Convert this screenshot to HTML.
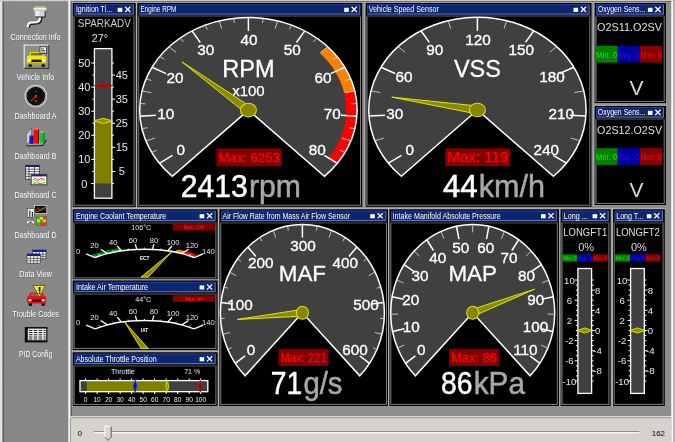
<!DOCTYPE html>
<html><head><meta charset="utf-8"><title>Dashboard A</title>
<style>html,body{margin:0;padding:0;background:#8c8c8c;overflow:hidden}svg{display:block}text{font-family:'Liberation Sans', Arial, sans-serif;}</style>
</head><body>
<svg width="675" height="442" viewBox="0 0 675 442">
<defs><pattern id="dots" width="7" height="7" patternUnits="userSpaceOnUse"><rect width="7" height="7" fill="#888888"/><rect x="1" y="1" width="1" height="1" fill="#7e7e7e"/><rect x="4.5" y="4.5" width="1" height="1" fill="#828282"/></pattern></defs>
<filter id="soft" x="-2%" y="-2%" width="104%" height="104%" filterUnits="objectBoundingBox"><feGaussianBlur stdDeviation="0.35"/></filter>
<g filter="url(#soft)">
<rect x="-8.00" y="-8.00" width="691.00" height="458.00" fill="#8e8e8e" />
<rect x="-8.00" y="-8.00" width="691.00" height="9.40" fill="#cfcbc4" />
<rect x="71.00" y="1.10" width="601.00" height="0.90" fill="#5a5a5a" />
<rect x="-8.00" y="1.10" width="76.30" height="448.90" fill="url(#dots)" />
<rect x="-8.00" y="-8.00" width="10.60" height="458.00" fill="#e6e3dc" />
<rect x="2.60" y="1.00" width="1.20" height="449.00" fill="#585858" />
<rect x="3.80" y="1.40" width="64.50" height="0.70" fill="#6c6c6c" />
<rect x="68.30" y="0.00" width="1.70" height="450.00" fill="#f4f4f4" />
<rect x="70.00" y="1.00" width="1.00" height="416.00" fill="#b0b0b0" />
<rect x="70.90" y="1.00" width="0.90" height="416.00" fill="#4a4a4a" />
<rect x="-8.00" y="-8.00" width="76.30" height="9.40" fill="#cfcbc4" />
<rect x="671.20" y="1.00" width="2.20" height="449.00" fill="#f4f4f4" />
<rect x="673.40" y="-8.00" width="9.60" height="458.00" fill="#b8b5ae" />
<rect x="70.00" y="416.30" width="602.00" height="1.20" fill="#fbfbfb" />
<rect x="70.80" y="417.50" width="600.70" height="32.50" fill="#d6d3cc" />
<rect x="71.50" y="417.40" width="599.70" height="0.70" fill="#8a8884" />
<rect x="71.50" y="1.80" width="64.70" height="1.10" fill="#b4b4b4" />
<rect x="71.80" y="1.80" width="0.90" height="205.50" fill="#b4b4b4" />
<rect x="72.70" y="2.90" width="63.00" height="203.90" fill="#000" />
<rect x="74.30" y="4.20" width="59.40" height="10.30" fill="#0e2672" />
<path d="M74.70 14.10 V4.60 H133.30" fill="none" stroke="#33459a" stroke-width="0.8"/>
<path d="M133.30 4.60 V14.10 H74.70" fill="none" stroke="#7c86c2" stroke-width="0.8"/>
<text x="75.9" y="12.1" font-size="8.2" fill="#fff" text-anchor="start" textLength="36.3" lengthAdjust="spacingAndGlyphs" >Ignition Ti...</text>
<rect x="117.70" y="7.80" width="4.60" height="4.10" fill="#fff" />
<path d="M125.10 6.80 l5.2 5.2 m0 -5.2 l-5.2 5.2" stroke="#fff" stroke-width="1.3" fill="none"/>
<rect x="74.00" y="16.40" width="60.00" height="188.80" fill="#000" stroke="#7c7c78" stroke-width="1"/>
<path d="M74.00 205.20 V16.40" fill="none" stroke="#5c5c5c" stroke-width="1"/>
<rect x="73.50" y="15.00" width="61.00" height="2.00" fill="#2e2e2e" />
<rect x="136.10" y="1.80" width="226.60" height="1.10" fill="#b4b4b4" />
<rect x="136.00" y="1.80" width="1.30" height="205.50" fill="#b4b4b4" />
<rect x="137.30" y="2.90" width="224.90" height="203.90" fill="#000" />
<rect x="138.90" y="4.20" width="221.30" height="10.30" fill="#0e2672" />
<path d="M139.30 14.10 V4.60 H359.80" fill="none" stroke="#33459a" stroke-width="0.8"/>
<path d="M359.80 4.60 V14.10 H139.30" fill="none" stroke="#7c86c2" stroke-width="0.8"/>
<text x="140.5" y="12.1" font-size="8.2" fill="#fff" text-anchor="start" textLength="35.8" lengthAdjust="spacingAndGlyphs" >Engine RPM</text>
<rect x="344.20" y="7.80" width="4.60" height="4.10" fill="#fff" />
<path d="M351.60 6.80 l5.2 5.2 m0 -5.2 l-5.2 5.2" stroke="#fff" stroke-width="1.3" fill="none"/>
<rect x="138.60" y="16.40" width="221.90" height="188.80" fill="#000" stroke="#7c7c78" stroke-width="1"/>
<path d="M138.60 205.20 V16.40" fill="none" stroke="#5c5c5c" stroke-width="1"/>
<rect x="138.10" y="15.00" width="222.90" height="2.00" fill="#2e2e2e" />
<rect x="364.40" y="1.80" width="227.60" height="1.10" fill="#b4b4b4" />
<rect x="364.30" y="1.80" width="1.30" height="205.50" fill="#b4b4b4" />
<rect x="365.60" y="2.90" width="225.90" height="203.90" fill="#000" />
<rect x="367.20" y="4.20" width="222.30" height="10.30" fill="#0e2672" />
<path d="M367.60 14.10 V4.60 H589.10" fill="none" stroke="#33459a" stroke-width="0.8"/>
<path d="M589.10 4.60 V14.10 H367.60" fill="none" stroke="#7c86c2" stroke-width="0.8"/>
<text x="368.8" y="12.1" font-size="8.2" fill="#fff" text-anchor="start" textLength="70.0" lengthAdjust="spacingAndGlyphs" >Vehicle Speed Sensor</text>
<rect x="573.50" y="7.80" width="4.60" height="4.10" fill="#fff" />
<path d="M580.90 6.80 l5.2 5.2 m0 -5.2 l-5.2 5.2" stroke="#fff" stroke-width="1.3" fill="none"/>
<rect x="366.90" y="16.40" width="222.90" height="188.80" fill="#000" stroke="#7c7c78" stroke-width="1"/>
<path d="M366.90 205.20 V16.40" fill="none" stroke="#5c5c5c" stroke-width="1"/>
<rect x="366.40" y="15.00" width="223.90" height="2.00" fill="#2e2e2e" />
<rect x="593.40" y="1.80" width="73.00" height="1.10" fill="#b4b4b4" />
<rect x="593.30" y="1.80" width="1.30" height="101.70" fill="#b4b4b4" />
<rect x="594.60" y="2.90" width="71.30" height="100.10" fill="#000" />
<rect x="596.20" y="4.20" width="67.70" height="10.30" fill="#0e2672" />
<path d="M596.60 14.10 V4.60 H663.50" fill="none" stroke="#33459a" stroke-width="0.8"/>
<path d="M663.50 4.60 V14.10 H596.60" fill="none" stroke="#7c86c2" stroke-width="0.8"/>
<text x="597.8" y="12.1" font-size="8.2" fill="#fff" text-anchor="start" textLength="47.5" lengthAdjust="spacingAndGlyphs" >Oxygen Sens...</text>
<rect x="647.90" y="7.80" width="4.60" height="4.10" fill="#fff" />
<path d="M655.30 6.80 l5.2 5.2 m0 -5.2 l-5.2 5.2" stroke="#fff" stroke-width="1.3" fill="none"/>
<rect x="595.90" y="16.40" width="68.30" height="85.00" fill="#000" stroke="#7c7c78" stroke-width="1"/>
<path d="M595.90 101.40 V16.40" fill="none" stroke="#5c5c5c" stroke-width="1"/>
<rect x="595.40" y="15.00" width="69.30" height="2.00" fill="#2e2e2e" />
<rect x="593.40" y="104.80" width="73.00" height="1.10" fill="#b4b4b4" />
<rect x="593.30" y="104.80" width="1.30" height="100.70" fill="#b4b4b4" />
<rect x="594.60" y="105.90" width="71.30" height="99.10" fill="#000" />
<rect x="596.20" y="107.20" width="67.70" height="10.30" fill="#0e2672" />
<path d="M596.60 117.10 V107.60 H663.50" fill="none" stroke="#33459a" stroke-width="0.8"/>
<path d="M663.50 107.60 V117.10 H596.60" fill="none" stroke="#7c86c2" stroke-width="0.8"/>
<text x="597.8" y="115.1" font-size="8.2" fill="#fff" text-anchor="start" textLength="47.5" lengthAdjust="spacingAndGlyphs" >Oxygen Sens...</text>
<rect x="647.90" y="110.80" width="4.60" height="4.10" fill="#fff" />
<path d="M655.30 109.80 l5.2 5.2 m0 -5.2 l-5.2 5.2" stroke="#fff" stroke-width="1.3" fill="none"/>
<rect x="595.90" y="119.40" width="68.30" height="84.00" fill="#000" stroke="#7c7c78" stroke-width="1"/>
<path d="M595.90 203.40 V119.40" fill="none" stroke="#5c5c5c" stroke-width="1"/>
<rect x="595.40" y="118.00" width="69.30" height="2.00" fill="#2e2e2e" />
<rect x="71.50" y="208.20" width="146.60" height="1.10" fill="#b4b4b4" />
<rect x="71.80" y="208.20" width="0.90" height="71.80" fill="#b4b4b4" />
<rect x="72.70" y="209.30" width="144.90" height="70.20" fill="#000" />
<rect x="74.30" y="210.60" width="141.30" height="10.30" fill="#0e2672" />
<path d="M74.70 220.50 V211.00 H215.20" fill="none" stroke="#33459a" stroke-width="0.8"/>
<path d="M215.20 211.00 V220.50 H74.70" fill="none" stroke="#7c86c2" stroke-width="0.8"/>
<text x="75.9" y="218.5" font-size="8.2" fill="#fff" text-anchor="start" textLength="90.4" lengthAdjust="spacingAndGlyphs" >Engine Coolant Temperature</text>
<rect x="199.60" y="214.20" width="4.60" height="4.10" fill="#fff" />
<path d="M207.00 213.20 l5.2 5.2 m0 -5.2 l-5.2 5.2" stroke="#fff" stroke-width="1.3" fill="none"/>
<rect x="74.00" y="222.80" width="141.90" height="55.10" fill="#000" stroke="#7c7c78" stroke-width="1"/>
<path d="M74.00 277.90 V222.80" fill="none" stroke="#5c5c5c" stroke-width="1"/>
<rect x="73.50" y="221.40" width="142.90" height="2.00" fill="#2e2e2e" />
<rect x="71.50" y="279.40" width="146.60" height="1.10" fill="#b4b4b4" />
<rect x="71.80" y="279.40" width="0.90" height="71.10" fill="#b4b4b4" />
<rect x="72.70" y="280.50" width="144.90" height="69.50" fill="#000" />
<rect x="74.30" y="281.80" width="141.30" height="10.30" fill="#0e2672" />
<path d="M74.70 291.70 V282.20 H215.20" fill="none" stroke="#33459a" stroke-width="0.8"/>
<path d="M215.20 282.20 V291.70 H74.70" fill="none" stroke="#7c86c2" stroke-width="0.8"/>
<text x="75.9" y="289.7" font-size="8.2" fill="#fff" text-anchor="start" textLength="72.2" lengthAdjust="spacingAndGlyphs" >Intake Air Temperature</text>
<rect x="199.60" y="285.40" width="4.60" height="4.10" fill="#fff" />
<path d="M207.00 284.40 l5.2 5.2 m0 -5.2 l-5.2 5.2" stroke="#fff" stroke-width="1.3" fill="none"/>
<rect x="74.00" y="294.00" width="141.90" height="54.40" fill="#000" stroke="#7c7c78" stroke-width="1"/>
<path d="M74.00 348.40 V294.00" fill="none" stroke="#5c5c5c" stroke-width="1"/>
<rect x="73.50" y="292.60" width="142.90" height="2.00" fill="#2e2e2e" />
<rect x="71.50" y="351.20" width="146.60" height="1.10" fill="#b4b4b4" />
<rect x="71.80" y="351.20" width="0.90" height="55.30" fill="#b4b4b4" />
<rect x="72.70" y="352.30" width="144.90" height="53.70" fill="#000" />
<rect x="74.30" y="353.60" width="141.30" height="10.30" fill="#0e2672" />
<path d="M74.70 363.50 V354.00 H215.20" fill="none" stroke="#33459a" stroke-width="0.8"/>
<path d="M215.20 354.00 V363.50 H74.70" fill="none" stroke="#7c86c2" stroke-width="0.8"/>
<text x="75.9" y="361.5" font-size="8.2" fill="#fff" text-anchor="start" textLength="80.7" lengthAdjust="spacingAndGlyphs" >Absolute Throttle Position</text>
<rect x="199.60" y="357.20" width="4.60" height="4.10" fill="#fff" />
<path d="M207.00 356.20 l5.2 5.2 m0 -5.2 l-5.2 5.2" stroke="#fff" stroke-width="1.3" fill="none"/>
<rect x="74.00" y="365.80" width="141.90" height="38.60" fill="#000" stroke="#7c7c78" stroke-width="1"/>
<path d="M74.00 404.40 V365.80" fill="none" stroke="#5c5c5c" stroke-width="1"/>
<rect x="73.50" y="364.40" width="142.90" height="2.00" fill="#2e2e2e" />
<rect x="218.20" y="208.20" width="170.50" height="1.10" fill="#b4b4b4" />
<rect x="218.10" y="208.20" width="1.30" height="198.30" fill="#b4b4b4" />
<rect x="219.40" y="209.30" width="168.80" height="196.70" fill="#000" />
<rect x="221.00" y="210.60" width="165.20" height="10.30" fill="#0e2672" />
<path d="M221.40 220.50 V211.00 H385.80" fill="none" stroke="#33459a" stroke-width="0.8"/>
<path d="M385.80 211.00 V220.50 H221.40" fill="none" stroke="#7c86c2" stroke-width="0.8"/>
<text x="222.6" y="218.5" font-size="8.2" fill="#fff" text-anchor="start" textLength="127.5" lengthAdjust="spacingAndGlyphs" >Air Flow Rate from Mass Air Flow Sensor</text>
<rect x="370.20" y="214.20" width="4.60" height="4.10" fill="#fff" />
<path d="M377.60 213.20 l5.2 5.2 m0 -5.2 l-5.2 5.2" stroke="#fff" stroke-width="1.3" fill="none"/>
<rect x="220.70" y="222.80" width="165.80" height="181.60" fill="#000" stroke="#7c7c78" stroke-width="1"/>
<path d="M220.70 404.40 V222.80" fill="none" stroke="#5c5c5c" stroke-width="1"/>
<rect x="220.20" y="221.40" width="166.80" height="2.00" fill="#2e2e2e" />
<rect x="388.20" y="208.20" width="171.30" height="1.10" fill="#b4b4b4" />
<rect x="388.10" y="208.20" width="1.30" height="198.30" fill="#b4b4b4" />
<rect x="389.40" y="209.30" width="169.60" height="196.70" fill="#000" />
<rect x="391.00" y="210.60" width="166.00" height="10.30" fill="#0e2672" />
<path d="M391.40 220.50 V211.00 H556.60" fill="none" stroke="#33459a" stroke-width="0.8"/>
<path d="M556.60 211.00 V220.50 H391.40" fill="none" stroke="#7c86c2" stroke-width="0.8"/>
<text x="392.6" y="218.5" font-size="8.2" fill="#fff" text-anchor="start" textLength="108.0" lengthAdjust="spacingAndGlyphs" >Intake Manifold Absolute Pressure</text>
<rect x="541.00" y="214.20" width="4.60" height="4.10" fill="#fff" />
<path d="M548.40 213.20 l5.2 5.2 m0 -5.2 l-5.2 5.2" stroke="#fff" stroke-width="1.3" fill="none"/>
<rect x="390.70" y="222.80" width="166.60" height="181.60" fill="#000" stroke="#7c7c78" stroke-width="1"/>
<path d="M390.70 404.40 V222.80" fill="none" stroke="#5c5c5c" stroke-width="1"/>
<rect x="390.20" y="221.40" width="167.60" height="2.00" fill="#2e2e2e" />
<rect x="559.40" y="208.20" width="51.70" height="1.10" fill="#b4b4b4" />
<rect x="559.30" y="208.20" width="1.30" height="198.30" fill="#b4b4b4" />
<rect x="560.60" y="209.30" width="50.00" height="196.70" fill="#000" />
<rect x="562.20" y="210.60" width="46.40" height="10.30" fill="#0e2672" />
<path d="M562.60 220.50 V211.00 H608.20" fill="none" stroke="#33459a" stroke-width="0.8"/>
<path d="M608.20 211.00 V220.50 H562.60" fill="none" stroke="#7c86c2" stroke-width="0.8"/>
<text x="563.8" y="218.5" font-size="8.2" fill="#fff" text-anchor="start" textLength="23.9" lengthAdjust="spacingAndGlyphs" >Long ...</text>
<rect x="592.60" y="214.20" width="4.60" height="4.10" fill="#fff" />
<path d="M600.00 213.20 l5.2 5.2 m0 -5.2 l-5.2 5.2" stroke="#fff" stroke-width="1.3" fill="none"/>
<rect x="561.90" y="222.80" width="47.00" height="181.60" fill="#000" stroke="#7c7c78" stroke-width="1"/>
<path d="M561.90 404.40 V222.80" fill="none" stroke="#5c5c5c" stroke-width="1"/>
<rect x="561.40" y="221.40" width="48.00" height="2.00" fill="#2e2e2e" />
<rect x="611.80" y="208.20" width="53.50" height="1.10" fill="#b4b4b4" />
<rect x="611.70" y="208.20" width="1.30" height="198.30" fill="#b4b4b4" />
<rect x="613.00" y="209.30" width="51.80" height="196.70" fill="#000" />
<rect x="614.60" y="210.60" width="48.20" height="10.30" fill="#0e2672" />
<path d="M615.00 220.50 V211.00 H662.40" fill="none" stroke="#33459a" stroke-width="0.8"/>
<path d="M662.40 211.00 V220.50 H615.00" fill="none" stroke="#7c86c2" stroke-width="0.8"/>
<text x="616.2" y="218.5" font-size="8.2" fill="#fff" text-anchor="start" textLength="27.1" lengthAdjust="spacingAndGlyphs" >Long T...</text>
<rect x="646.80" y="214.20" width="4.60" height="4.10" fill="#fff" />
<path d="M654.20 213.20 l5.2 5.2 m0 -5.2 l-5.2 5.2" stroke="#fff" stroke-width="1.3" fill="none"/>
<rect x="614.30" y="222.80" width="48.80" height="181.60" fill="#000" stroke="#7c7c78" stroke-width="1"/>
<path d="M614.30 404.40 V222.80" fill="none" stroke="#5c5c5c" stroke-width="1"/>
<rect x="613.80" y="221.40" width="49.80" height="2.00" fill="#2e2e2e" />
<path d="M248.40 110.10 L172.35 176.33 A108.7 92.7 0 1 1 324.45 176.33 Z" fill="#404040" stroke="none"/>
<path d="M327.34 47.05 A108.16 92.24 0 0 1 354.24 91.12 L344.14 92.93 A97.83 83.43 0 0 0 319.80 53.07 Z" fill="#ff8000"/>
<path d="M354.24 91.12 A108.16 92.24 0 0 1 337.00 163.00 L328.54 157.95 A97.83 83.43 0 0 0 344.14 92.93 Z" fill="#ff0000"/>
<path d="M248.40 110.10 L172.35 176.33 A108.7 92.7 0 1 1 324.45 176.33 Z" fill="none" stroke="#fff" stroke-width="1.5" stroke-linejoin="miter"/>
<line x1="159.36" y1="163.27" x2="172.45" y2="155.45" stroke="#fff" stroke-width="1.5" />
<line x1="151.71" y1="152.45" x2="156.74" y2="150.25" stroke="#d0d0d0" stroke-width="0.9" />
<line x1="145.86" y1="140.85" x2="154.88" y2="138.15" stroke="#d0d0d0" stroke-width="0.9" />
<line x1="141.91" y1="128.68" x2="147.44" y2="127.71" stroke="#d0d0d0" stroke-width="0.9" />
<text x="180.7" y="154.7" font-size="15.3" fill="#fff" text-anchor="middle" stroke="#fff" stroke-width="0.35">0</text>
<line x1="139.93" y1="116.16" x2="155.88" y2="115.27" stroke="#fff" stroke-width="1.5" />
<line x1="139.97" y1="103.53" x2="145.61" y2="103.87" stroke="#d0d0d0" stroke-width="0.9" />
<line x1="142.03" y1="91.02" x2="151.39" y2="92.70" stroke="#d0d0d0" stroke-width="0.9" />
<line x1="146.05" y1="78.87" x2="151.38" y2="80.49" stroke="#d0d0d0" stroke-width="0.9" />
<text x="165.8" y="119.3" font-size="15.3" fill="#fff" text-anchor="middle" stroke="#fff" stroke-width="0.35">10</text>
<line x1="151.98" y1="67.30" x2="166.16" y2="73.59" stroke="#fff" stroke-width="1.5" />
<line x1="159.70" y1="56.52" x2="164.31" y2="59.30" stroke="#d0d0d0" stroke-width="0.9" />
<line x1="169.06" y1="46.73" x2="176.05" y2="52.31" stroke="#d0d0d0" stroke-width="0.9" />
<line x1="179.90" y1="38.12" x2="183.46" y2="41.87" stroke="#d0d0d0" stroke-width="0.9" />
<text x="175.0" y="82.5" font-size="15.3" fill="#fff" text-anchor="middle" stroke="#fff" stroke-width="0.35">20</text>
<line x1="192.01" y1="30.85" x2="200.30" y2="42.50" stroke="#fff" stroke-width="1.5" />
<line x1="205.16" y1="25.05" x2="207.41" y2="29.47" stroke="#d0d0d0" stroke-width="0.9" />
<line x1="219.12" y1="20.83" x2="221.70" y2="28.68" stroke="#d0d0d0" stroke-width="0.9" />
<line x1="233.62" y1="18.26" x2="234.39" y2="23.04" stroke="#d0d0d0" stroke-width="0.9" />
<text x="205.7" y="55.0" font-size="15.3" fill="#fff" text-anchor="middle" stroke="#fff" stroke-width="0.35">30</text>
<line x1="248.40" y1="17.40" x2="248.40" y2="31.03" stroke="#fff" stroke-width="1.5" />
<line x1="263.18" y1="18.26" x2="262.41" y2="23.04" stroke="#d0d0d0" stroke-width="0.9" />
<line x1="277.68" y1="20.83" x2="275.10" y2="28.68" stroke="#d0d0d0" stroke-width="0.9" />
<line x1="291.64" y1="25.05" x2="289.39" y2="29.47" stroke="#d0d0d0" stroke-width="0.9" />
<text x="249.0" y="44.9" font-size="15.3" fill="#fff" text-anchor="middle" stroke="#fff" stroke-width="0.35">40</text>
<line x1="304.79" y1="30.85" x2="296.50" y2="42.50" stroke="#fff" stroke-width="1.5" />
<line x1="316.90" y1="38.12" x2="313.34" y2="41.87" stroke="#d0d0d0" stroke-width="0.9" />
<line x1="327.74" y1="46.73" x2="320.75" y2="52.31" stroke="#d0d0d0" stroke-width="0.9" />
<line x1="337.10" y1="56.52" x2="332.49" y2="59.30" stroke="#d0d0d0" stroke-width="0.9" />
<text x="292.3" y="55.0" font-size="15.3" fill="#fff" text-anchor="middle" stroke="#fff" stroke-width="0.35">50</text>
<line x1="344.82" y1="67.30" x2="330.64" y2="73.59" stroke="#fff" stroke-width="1.5" />
<line x1="350.75" y1="78.87" x2="345.42" y2="80.49" stroke="#d0d0d0" stroke-width="0.9" />
<line x1="354.77" y1="91.02" x2="345.41" y2="92.70" stroke="#d0d0d0" stroke-width="0.9" />
<line x1="356.83" y1="103.53" x2="351.19" y2="103.87" stroke="#d0d0d0" stroke-width="0.9" />
<text x="323.0" y="82.5" font-size="15.3" fill="#fff" text-anchor="middle" stroke="#fff" stroke-width="0.35">60</text>
<line x1="356.87" y1="116.16" x2="340.92" y2="115.27" stroke="#fff" stroke-width="1.5" />
<line x1="354.89" y1="128.68" x2="349.36" y2="127.71" stroke="#d0d0d0" stroke-width="0.9" />
<line x1="350.94" y1="140.85" x2="341.92" y2="138.15" stroke="#d0d0d0" stroke-width="0.9" />
<line x1="345.09" y1="152.45" x2="340.06" y2="150.25" stroke="#d0d0d0" stroke-width="0.9" />
<text x="332.2" y="119.3" font-size="15.3" fill="#fff" text-anchor="middle" stroke="#fff" stroke-width="0.35">70</text>
<line x1="337.44" y1="163.27" x2="324.35" y2="155.45" stroke="#fff" stroke-width="1.5" />
<text x="317.3" y="154.7" font-size="15.3" fill="#fff" text-anchor="middle" stroke="#fff" stroke-width="0.35">80</text>
<text x="248.4" y="76.8" font-size="23.5" fill="#fff" text-anchor="middle" stroke="#fff" stroke-width="0.3">RPM</text>
<text x="248.4" y="95.5" font-size="15" fill="#fff" text-anchor="middle" stroke="#fff" stroke-width="0.25">x100</text>
<path d="M182.18 62.03 L250.76 106.85 L246.04 113.35 Z" fill="#8a8a00" stroke="#e4e400" stroke-width="1" stroke-linejoin="round"/>
<ellipse cx="248.40" cy="110.10" rx="7.99" ry="6.81" fill="#858500" stroke="#dcdc00" stroke-width="1.1"/>
<rect x="216.40" y="148.40" width="65.40" height="18.00" fill="#800000" />
<text x="249.1" y="162.3" font-size="13.6" fill="#ff0000" text-anchor="middle" textLength="61.4" lengthAdjust="spacingAndGlyphs" stroke="#ff0000" stroke-width="0.3">Max: 6253</text>
<text x="180.7" y="196.6" font-size="30.5" fill="#fff" text-anchor="start" textLength="67.0" lengthAdjust="spacingAndGlyphs" stroke="#fff" stroke-width="0.5">2413</text>
<text x="248.9" y="196.6" font-size="30.5" fill="#a8a8a8" text-anchor="start" textLength="51.9" lengthAdjust="spacingAndGlyphs" stroke="#a8a8a8" stroke-width="0.5">rpm</text>
<path d="M477.40 110.00 L401.35 176.23 A108.7 92.7 0 1 1 553.45 176.23 Z" fill="#404040" stroke="none"/>
<path d="M477.40 110.00 L401.35 176.23 A108.7 92.7 0 1 1 553.45 176.23 Z" fill="none" stroke="#fff" stroke-width="1.5" stroke-linejoin="miter"/>
<line x1="388.36" y1="163.17" x2="401.45" y2="155.35" stroke="#fff" stroke-width="1.5" />
<line x1="374.86" y1="140.75" x2="383.88" y2="138.05" stroke="#d0d0d0" stroke-width="0.9" />
<text x="409.7" y="154.6" font-size="15.3" fill="#fff" text-anchor="middle" stroke="#fff" stroke-width="0.35">0</text>
<line x1="368.93" y1="116.06" x2="384.88" y2="115.17" stroke="#fff" stroke-width="1.5" />
<line x1="371.03" y1="90.92" x2="380.39" y2="92.60" stroke="#d0d0d0" stroke-width="0.9" />
<text x="394.8" y="119.2" font-size="15.3" fill="#fff" text-anchor="middle" stroke="#fff" stroke-width="0.35">30</text>
<line x1="380.98" y1="67.20" x2="395.16" y2="73.49" stroke="#fff" stroke-width="1.5" />
<line x1="398.06" y1="46.63" x2="405.05" y2="52.21" stroke="#d0d0d0" stroke-width="0.9" />
<text x="404.0" y="82.4" font-size="15.3" fill="#fff" text-anchor="middle" stroke="#fff" stroke-width="0.35">60</text>
<line x1="421.01" y1="30.75" x2="429.30" y2="42.40" stroke="#fff" stroke-width="1.5" />
<line x1="448.12" y1="20.73" x2="450.70" y2="28.58" stroke="#d0d0d0" stroke-width="0.9" />
<text x="434.7" y="54.9" font-size="15.3" fill="#fff" text-anchor="middle" stroke="#fff" stroke-width="0.35">90</text>
<line x1="477.40" y1="17.30" x2="477.40" y2="30.93" stroke="#fff" stroke-width="1.5" />
<line x1="506.68" y1="20.73" x2="504.10" y2="28.58" stroke="#d0d0d0" stroke-width="0.9" />
<text x="478.0" y="44.8" font-size="15.3" fill="#fff" text-anchor="middle" stroke="#fff" stroke-width="0.35">120</text>
<line x1="533.79" y1="30.75" x2="525.50" y2="42.40" stroke="#fff" stroke-width="1.5" />
<line x1="556.74" y1="46.63" x2="549.75" y2="52.21" stroke="#d0d0d0" stroke-width="0.9" />
<text x="521.3" y="54.9" font-size="15.3" fill="#fff" text-anchor="middle" stroke="#fff" stroke-width="0.35">150</text>
<line x1="573.82" y1="67.20" x2="559.64" y2="73.49" stroke="#fff" stroke-width="1.5" />
<line x1="583.77" y1="90.92" x2="574.41" y2="92.60" stroke="#d0d0d0" stroke-width="0.9" />
<text x="552.0" y="82.4" font-size="15.3" fill="#fff" text-anchor="middle" stroke="#fff" stroke-width="0.35">180</text>
<line x1="585.87" y1="116.06" x2="569.92" y2="115.17" stroke="#fff" stroke-width="1.5" />
<line x1="579.94" y1="140.75" x2="570.92" y2="138.05" stroke="#d0d0d0" stroke-width="0.9" />
<text x="561.2" y="119.2" font-size="15.3" fill="#fff" text-anchor="middle" stroke="#fff" stroke-width="0.35">210</text>
<line x1="566.44" y1="163.17" x2="553.35" y2="155.35" stroke="#fff" stroke-width="1.5" />
<text x="546.3" y="154.6" font-size="15.3" fill="#fff" text-anchor="middle" stroke="#fff" stroke-width="0.35">240</text>
<text x="477.4" y="76.8" font-size="23.5" fill="#fff" text-anchor="middle" stroke="#fff" stroke-width="0.3">VSS</text>
<path d="M391.76 97.12 L478.00 106.03 L476.80 113.97 Z" fill="#8a8a00" stroke="#e4e400" stroke-width="1" stroke-linejoin="round"/>
<ellipse cx="477.40" cy="110.00" rx="7.99" ry="6.81" fill="#858500" stroke="#dcdc00" stroke-width="1.1"/>
<rect x="445.20" y="148.40" width="65.20" height="17.80" fill="#800000" />
<text x="477.8" y="162.3" font-size="14" fill="#ff0000" text-anchor="middle" textLength="61.2" lengthAdjust="spacingAndGlyphs" stroke="#ff0000" stroke-width="0.3">Max: 119</text>
<text x="443.0" y="197.0" font-size="30.5" fill="#fff" text-anchor="start" textLength="34.5" lengthAdjust="spacingAndGlyphs" stroke="#fff" stroke-width="0.5">44</text>
<text x="478.7" y="197.0" font-size="30.5" fill="#a8a8a8" text-anchor="start" textLength="66.3" lengthAdjust="spacingAndGlyphs" stroke="#a8a8a8" stroke-width="0.5">km/h</text>
<path d="M302.40 312.80 L245.03 375.82 A82.0 88.2 0 1 1 359.77 375.82 Z" fill="#404040" stroke="none"/>
<path d="M302.40 312.80 L245.03 375.82 A82.0 88.2 0 1 1 359.77 375.82 Z" fill="none" stroke="#fff" stroke-width="1.5" stroke-linejoin="miter"/>
<line x1="235.23" y1="363.39" x2="245.10" y2="355.95" stroke="#fff" stroke-width="1.5" />
<line x1="227.83" y1="349.49" x2="231.71" y2="347.58" stroke="#d0d0d0" stroke-width="0.9" />
<line x1="222.89" y1="334.39" x2="229.89" y2="332.49" stroke="#d0d0d0" stroke-width="0.9" />
<line x1="220.58" y1="318.57" x2="224.83" y2="318.27" stroke="#d0d0d0" stroke-width="0.9" />
<text x="250.9" y="355.4" font-size="15.3" fill="#fff" text-anchor="middle" stroke="#fff" stroke-width="0.35">0</text>
<line x1="220.95" y1="302.56" x2="232.93" y2="304.07" stroke="#fff" stroke-width="1.5" />
<line x1="224.02" y1="286.89" x2="228.09" y2="288.24" stroke="#d0d0d0" stroke-width="0.9" />
<line x1="229.67" y1="272.07" x2="236.07" y2="275.66" stroke="#d0d0d0" stroke-width="0.9" />
<line x1="237.71" y1="258.60" x2="241.07" y2="261.42" stroke="#d0d0d0" stroke-width="0.9" />
<text x="239.9" y="309.7" font-size="15.3" fill="#fff" text-anchor="middle" stroke="#fff" stroke-width="0.35">100</text>
<line x1="247.89" y1="246.91" x2="255.90" y2="256.60" stroke="#fff" stroke-width="1.5" />
<line x1="259.86" y1="237.40" x2="262.07" y2="241.32" stroke="#d0d0d0" stroke-width="0.9" />
<line x1="273.24" y1="230.37" x2="275.80" y2="237.62" stroke="#d0d0d0" stroke-width="0.9" />
<line x1="287.57" y1="226.05" x2="288.34" y2="230.56" stroke="#d0d0d0" stroke-width="0.9" />
<text x="260.8" y="268.0" font-size="15.3" fill="#fff" text-anchor="middle" stroke="#fff" stroke-width="0.35">200</text>
<line x1="302.40" y1="224.60" x2="302.40" y2="237.57" stroke="#fff" stroke-width="1.5" />
<line x1="317.23" y1="226.05" x2="316.46" y2="230.56" stroke="#d0d0d0" stroke-width="0.9" />
<line x1="331.56" y1="230.37" x2="329.00" y2="237.62" stroke="#d0d0d0" stroke-width="0.9" />
<line x1="344.94" y1="237.40" x2="342.73" y2="241.32" stroke="#d0d0d0" stroke-width="0.9" />
<text x="303.0" y="251.3" font-size="15.3" fill="#fff" text-anchor="middle" stroke="#fff" stroke-width="0.35">300</text>
<line x1="356.91" y1="246.91" x2="348.90" y2="256.60" stroke="#fff" stroke-width="1.5" />
<line x1="367.09" y1="258.60" x2="363.73" y2="261.42" stroke="#d0d0d0" stroke-width="0.9" />
<line x1="375.13" y1="272.07" x2="368.73" y2="275.66" stroke="#d0d0d0" stroke-width="0.9" />
<line x1="380.78" y1="286.89" x2="376.71" y2="288.24" stroke="#d0d0d0" stroke-width="0.9" />
<text x="345.2" y="268.0" font-size="15.3" fill="#fff" text-anchor="middle" stroke="#fff" stroke-width="0.35">400</text>
<line x1="383.85" y1="302.56" x2="371.87" y2="304.07" stroke="#fff" stroke-width="1.5" />
<line x1="384.22" y1="318.57" x2="379.97" y2="318.27" stroke="#d0d0d0" stroke-width="0.9" />
<line x1="381.91" y1="334.39" x2="374.91" y2="332.49" stroke="#d0d0d0" stroke-width="0.9" />
<line x1="376.97" y1="349.49" x2="373.09" y2="347.58" stroke="#d0d0d0" stroke-width="0.9" />
<text x="366.1" y="309.7" font-size="15.3" fill="#fff" text-anchor="middle" stroke="#fff" stroke-width="0.35">500</text>
<line x1="369.57" y1="363.39" x2="359.70" y2="355.95" stroke="#fff" stroke-width="1.5" />
<text x="355.1" y="355.4" font-size="15.3" fill="#fff" text-anchor="middle" stroke="#fff" stroke-width="0.35">600</text>
<text x="302.4" y="280.5" font-size="22.4" fill="#fff" text-anchor="middle" stroke="#fff" stroke-width="0.3">MAF</text>
<path d="M237.09 319.46 L302.05 309.42 L302.75 316.18 Z" fill="#8a8a00" stroke="#e4e400" stroke-width="1" stroke-linejoin="round"/>
<ellipse cx="302.40" cy="312.80" rx="6.03" ry="6.48" fill="#858500" stroke="#dcdc00" stroke-width="1.1"/>
<rect x="278.50" y="348.80" width="50.10" height="17.20" fill="#800000" />
<text x="303.6" y="361.7" font-size="12" fill="#ff0000" text-anchor="middle" textLength="46.1" lengthAdjust="spacingAndGlyphs" stroke="#ff0000" stroke-width="0.3">Max: 221</text>
<text x="270.7" y="394.2" font-size="30.5" fill="#fff" text-anchor="start" textLength="31.5" lengthAdjust="spacingAndGlyphs" stroke="#fff" stroke-width="0.5">71</text>
<text x="303.4" y="394.2" font-size="30.5" fill="#a8a8a8" text-anchor="start" textLength="39.1" lengthAdjust="spacingAndGlyphs" stroke="#a8a8a8" stroke-width="0.5">g/s</text>
<path d="M472.70 312.80 L415.33 375.82 A82.0 88.2 0 1 1 530.07 375.82 Z" fill="#404040" stroke="none"/>
<path d="M472.70 312.80 L415.33 375.82 A82.0 88.2 0 1 1 530.07 375.82 Z" fill="none" stroke="#fff" stroke-width="1.5" stroke-linejoin="miter"/>
<line x1="405.53" y1="363.39" x2="415.40" y2="355.95" stroke="#fff" stroke-width="1.5" />
<line x1="397.58" y1="348.16" x2="404.19" y2="345.05" stroke="#d0d0d0" stroke-width="0.9" />
<text x="421.2" y="355.4" font-size="15.3" fill="#fff" text-anchor="middle" stroke="#fff" stroke-width="0.35">0</text>
<line x1="392.57" y1="331.55" x2="404.35" y2="328.79" stroke="#fff" stroke-width="1.5" />
<line x1="390.71" y1="314.20" x2="397.93" y2="314.08" stroke="#d0d0d0" stroke-width="0.9" />
<text x="411.2" y="331.5" font-size="15.3" fill="#fff" text-anchor="middle" stroke="#fff" stroke-width="0.35">10</text>
<line x1="392.06" y1="296.80" x2="403.92" y2="299.15" stroke="#fff" stroke-width="1.5" />
<line x1="396.57" y1="280.02" x2="403.27" y2="282.90" stroke="#d0d0d0" stroke-width="0.9" />
<text x="410.8" y="305.4" font-size="15.3" fill="#fff" text-anchor="middle" stroke="#fff" stroke-width="0.35">20</text>
<line x1="404.07" y1="264.53" x2="414.16" y2="271.62" stroke="#fff" stroke-width="1.5" />
<line x1="414.26" y1="250.93" x2="419.40" y2="256.37" stroke="#d0d0d0" stroke-width="0.9" />
<text x="420.1" y="281.2" font-size="15.3" fill="#fff" text-anchor="middle" stroke="#fff" stroke-width="0.35">30</text>
<line x1="426.74" y1="239.76" x2="433.49" y2="250.49" stroke="#fff" stroke-width="1.5" />
<line x1="441.02" y1="231.45" x2="443.81" y2="238.61" stroke="#d0d0d0" stroke-width="0.9" />
<text x="437.7" y="262.6" font-size="15.3" fill="#fff" text-anchor="middle" stroke="#fff" stroke-width="0.35">40</text>
<line x1="456.54" y1="226.33" x2="458.92" y2="239.04" stroke="#fff" stroke-width="1.5" />
<line x1="472.70" y1="224.60" x2="472.70" y2="232.36" stroke="#d0d0d0" stroke-width="0.9" />
<text x="460.8" y="252.6" font-size="15.3" fill="#fff" text-anchor="middle" stroke="#fff" stroke-width="0.35">50</text>
<line x1="488.86" y1="226.33" x2="486.48" y2="239.04" stroke="#fff" stroke-width="1.5" />
<line x1="504.38" y1="231.45" x2="501.59" y2="238.61" stroke="#d0d0d0" stroke-width="0.9" />
<text x="485.8" y="252.6" font-size="15.3" fill="#fff" text-anchor="middle" stroke="#fff" stroke-width="0.35">60</text>
<line x1="518.66" y1="239.76" x2="511.91" y2="250.49" stroke="#fff" stroke-width="1.5" />
<line x1="531.14" y1="250.93" x2="526.00" y2="256.37" stroke="#d0d0d0" stroke-width="0.9" />
<text x="508.9" y="262.6" font-size="15.3" fill="#fff" text-anchor="middle" stroke="#fff" stroke-width="0.35">70</text>
<line x1="541.33" y1="264.53" x2="531.24" y2="271.62" stroke="#fff" stroke-width="1.5" />
<line x1="548.83" y1="280.02" x2="542.13" y2="282.90" stroke="#d0d0d0" stroke-width="0.9" />
<text x="526.5" y="281.2" font-size="15.3" fill="#fff" text-anchor="middle" stroke="#fff" stroke-width="0.35">80</text>
<line x1="553.34" y1="296.80" x2="541.48" y2="299.15" stroke="#fff" stroke-width="1.5" />
<line x1="554.69" y1="314.20" x2="547.47" y2="314.08" stroke="#d0d0d0" stroke-width="0.9" />
<text x="535.8" y="305.4" font-size="15.3" fill="#fff" text-anchor="middle" stroke="#fff" stroke-width="0.35">90</text>
<line x1="552.83" y1="331.55" x2="541.05" y2="328.79" stroke="#fff" stroke-width="1.5" />
<line x1="547.82" y1="348.16" x2="541.21" y2="345.05" stroke="#d0d0d0" stroke-width="0.9" />
<text x="535.4" y="331.5" font-size="15.3" fill="#fff" text-anchor="middle" stroke="#fff" stroke-width="0.35">100</text>
<line x1="539.87" y1="363.39" x2="530.00" y2="355.95" stroke="#fff" stroke-width="1.5" />
<text x="525.4" y="355.4" font-size="15.3" fill="#fff" text-anchor="middle" stroke="#fff" stroke-width="0.35">110</text>
<text x="472.7" y="280.5" font-size="22.4" fill="#fff" text-anchor="middle" stroke="#fff" stroke-width="0.3">MAP</text>
<path d="M534.52 289.19 L473.91 315.98 L471.49 309.62 Z" fill="#8a8a00" stroke="#e4e400" stroke-width="1" stroke-linejoin="round"/>
<ellipse cx="472.70" cy="312.80" rx="6.03" ry="6.48" fill="#858500" stroke="#dcdc00" stroke-width="1.1"/>
<rect x="449.00" y="348.80" width="50.00" height="17.20" fill="#800000" />
<text x="474.0" y="361.7" font-size="12" fill="#ff0000" text-anchor="middle" textLength="46.0" lengthAdjust="spacingAndGlyphs" stroke="#ff0000" stroke-width="0.3">Max: 86</text>
<text x="441.0" y="394.2" font-size="30.5" fill="#fff" text-anchor="start" textLength="31.5" lengthAdjust="spacingAndGlyphs" stroke="#fff" stroke-width="0.5">86</text>
<text x="473.7" y="394.2" font-size="30.5" fill="#a8a8a8" text-anchor="start" textLength="51.3" lengthAdjust="spacingAndGlyphs" stroke="#a8a8a8" stroke-width="0.5">kPa</text>
<text x="104.3" y="27.2" font-size="10.2" fill="#d0d0d0" text-anchor="middle" textLength="53.0" lengthAdjust="spacingAndGlyphs" >SPARKADV</text>
<text x="99.8" y="41.6" font-size="10.8" fill="#e0e0e0" text-anchor="middle" >27°</text>
<rect x="94.40" y="48.60" width="17.50" height="149.60" fill="#404040" />
<rect x="94.40" y="120.36" width="17.50" height="63.14" fill="#808000" />
<rect x="94.40" y="48.60" width="17.50" height="149.60" fill="none" stroke="#fff" stroke-width="1.3"/>
<line x1="91.20" y1="183.50" x2="94.40" y2="183.50" stroke="#fff" stroke-width="1" />
<line x1="111.90" y1="183.50" x2="113.90" y2="183.50" stroke="#fff" stroke-width="1" />
<line x1="92.40" y1="171.45" x2="94.40" y2="171.45" stroke="#fff" stroke-width="1" />
<line x1="111.90" y1="171.45" x2="115.10" y2="171.45" stroke="#fff" stroke-width="1" />
<line x1="91.20" y1="159.40" x2="94.40" y2="159.40" stroke="#fff" stroke-width="1" />
<line x1="111.90" y1="159.40" x2="113.90" y2="159.40" stroke="#fff" stroke-width="1" />
<line x1="92.40" y1="147.35" x2="94.40" y2="147.35" stroke="#fff" stroke-width="1" />
<line x1="111.90" y1="147.35" x2="115.10" y2="147.35" stroke="#fff" stroke-width="1" />
<line x1="91.20" y1="135.30" x2="94.40" y2="135.30" stroke="#fff" stroke-width="1" />
<line x1="111.90" y1="135.30" x2="113.90" y2="135.30" stroke="#fff" stroke-width="1" />
<line x1="92.40" y1="123.25" x2="94.40" y2="123.25" stroke="#fff" stroke-width="1" />
<line x1="111.90" y1="123.25" x2="115.10" y2="123.25" stroke="#fff" stroke-width="1" />
<line x1="91.20" y1="111.20" x2="94.40" y2="111.20" stroke="#fff" stroke-width="1" />
<line x1="111.90" y1="111.20" x2="113.90" y2="111.20" stroke="#fff" stroke-width="1" />
<line x1="92.40" y1="99.15" x2="94.40" y2="99.15" stroke="#fff" stroke-width="1" />
<line x1="111.90" y1="99.15" x2="115.10" y2="99.15" stroke="#fff" stroke-width="1" />
<line x1="91.20" y1="87.10" x2="94.40" y2="87.10" stroke="#fff" stroke-width="1" />
<line x1="111.90" y1="87.10" x2="113.90" y2="87.10" stroke="#fff" stroke-width="1" />
<line x1="92.40" y1="75.05" x2="94.40" y2="75.05" stroke="#fff" stroke-width="1" />
<line x1="111.90" y1="75.05" x2="115.10" y2="75.05" stroke="#fff" stroke-width="1" />
<line x1="91.20" y1="63.00" x2="94.40" y2="63.00" stroke="#fff" stroke-width="1" />
<line x1="111.90" y1="63.00" x2="113.90" y2="63.00" stroke="#fff" stroke-width="1" />
<text x="84.3" y="187.5" font-size="11" fill="#e8e8e8" text-anchor="middle" >0</text>
<text x="84.3" y="163.4" font-size="11" fill="#e8e8e8" text-anchor="middle" >10</text>
<text x="84.3" y="139.3" font-size="11" fill="#e8e8e8" text-anchor="middle" >20</text>
<text x="84.3" y="115.2" font-size="11" fill="#e8e8e8" text-anchor="middle" >30</text>
<text x="84.3" y="91.1" font-size="11" fill="#e8e8e8" text-anchor="middle" >40</text>
<text x="84.3" y="67.0" font-size="11" fill="#e8e8e8" text-anchor="middle" >50</text>
<text x="121.8" y="175.4" font-size="11" fill="#e8e8e8" text-anchor="middle" >5</text>
<text x="121.8" y="151.3" font-size="11" fill="#e8e8e8" text-anchor="middle" >15</text>
<text x="121.8" y="127.2" font-size="11" fill="#e8e8e8" text-anchor="middle" >25</text>
<text x="121.8" y="103.1" font-size="11" fill="#e8e8e8" text-anchor="middle" >35</text>
<text x="121.8" y="79.0" font-size="11" fill="#e8e8e8" text-anchor="middle" >45</text>
<path d="M93.90 85.65 L103.15 84.15 L112.40 85.65 L103.15 87.15 Z" fill="#a00000" stroke="#e00000" stroke-width="0.8"/>
<path d="M93.90 120.84 L103.15 118.24 L112.40 120.84 L103.15 123.44 Z" fill="#909000" stroke="#e8e800" stroke-width="0.9"/>
<text x="629.6" y="31.4" font-size="11.4" fill="#e0e0e0" text-anchor="middle" textLength="65.0" lengthAdjust="spacingAndGlyphs" >O2S11.O2SV</text>
<rect x="595.40" y="45.80" width="22.27" height="16.70" fill="#008000" />
<text x="606.5" y="57.6" font-size="9.6" fill="#00f000" text-anchor="middle" textLength="20.8" lengthAdjust="spacingAndGlyphs" >Min: 0</text>
<rect x="617.67" y="45.80" width="22.27" height="16.70" fill="#0000a0" />
<text x="628.8" y="57.6" font-size="9.6" fill="#1414ff" text-anchor="middle" textLength="20.8" lengthAdjust="spacingAndGlyphs" >Avg: 0</text>
<rect x="639.93" y="45.80" width="22.27" height="16.70" fill="#880000" />
<text x="651.1" y="57.6" font-size="9.6" fill="#ff0808" text-anchor="middle" textLength="20.8" lengthAdjust="spacingAndGlyphs" >Max: 0</text>
<text x="636.6" y="95.0" font-size="21" fill="#d8d8d8" text-anchor="middle" >V</text>
<text x="629.6" y="133.8" font-size="11.4" fill="#e0e0e0" text-anchor="middle" textLength="65.0" lengthAdjust="spacingAndGlyphs" >O2S12.O2SV</text>
<rect x="595.40" y="148.20" width="22.27" height="16.70" fill="#008000" />
<text x="606.5" y="160.0" font-size="9.6" fill="#00f000" text-anchor="middle" textLength="20.8" lengthAdjust="spacingAndGlyphs" >Min: 0</text>
<rect x="617.67" y="148.20" width="22.27" height="16.70" fill="#0000a0" />
<text x="628.8" y="160.0" font-size="9.6" fill="#1414ff" text-anchor="middle" textLength="20.8" lengthAdjust="spacingAndGlyphs" >Avg: 0</text>
<rect x="639.93" y="148.20" width="22.27" height="16.70" fill="#880000" />
<text x="651.1" y="160.0" font-size="9.6" fill="#ff0808" text-anchor="middle" textLength="20.8" lengthAdjust="spacingAndGlyphs" >Max: 0</text>
<text x="636.6" y="197.4" font-size="21" fill="#d8d8d8" text-anchor="middle" >V</text>
<text x="585.2" y="235.7" font-size="10.4" fill="#e0e0e0" text-anchor="middle" textLength="44.0" lengthAdjust="spacingAndGlyphs" >LONGFT1</text>
<text x="586.2" y="250.8" font-size="11" fill="#d8d8d8" text-anchor="middle" >0%</text>
<rect x="562.20" y="254.30" width="15.20" height="7.40" fill="#008000" />
<text x="569.8" y="260.0" font-size="5.6" fill="#00f000" text-anchor="middle" textLength="13.7" lengthAdjust="spacingAndGlyphs" >Min: 0</text>
<rect x="577.40" y="254.30" width="15.20" height="7.40" fill="#0000a0" />
<text x="585.0" y="260.0" font-size="5.6" fill="#1414ff" text-anchor="middle" textLength="13.7" lengthAdjust="spacingAndGlyphs" >Avg: 0</text>
<rect x="592.60" y="254.30" width="15.20" height="7.40" fill="#880000" />
<text x="600.2" y="260.0" font-size="5.6" fill="#ff0808" text-anchor="middle" textLength="13.7" lengthAdjust="spacingAndGlyphs" >Max: 0</text>
<rect x="577.90" y="268.50" width="13.70" height="124.90" fill="#404040" />
<rect x="577.90" y="268.50" width="13.70" height="124.90" fill="none" stroke="#fff" stroke-width="1.3"/>
<line x1="574.70" y1="381.00" x2="577.90" y2="381.00" stroke="#fff" stroke-width="1" />
<line x1="591.60" y1="381.00" x2="593.60" y2="381.00" stroke="#fff" stroke-width="1" />
<line x1="575.90" y1="375.95" x2="577.90" y2="375.95" stroke="#fff" stroke-width="1" />
<line x1="591.60" y1="375.95" x2="593.60" y2="375.95" stroke="#fff" stroke-width="1" />
<line x1="575.90" y1="370.90" x2="577.90" y2="370.90" stroke="#fff" stroke-width="1" />
<line x1="591.60" y1="370.90" x2="594.80" y2="370.90" stroke="#fff" stroke-width="1" />
<line x1="575.90" y1="365.85" x2="577.90" y2="365.85" stroke="#fff" stroke-width="1" />
<line x1="591.60" y1="365.85" x2="593.60" y2="365.85" stroke="#fff" stroke-width="1" />
<line x1="574.70" y1="360.80" x2="577.90" y2="360.80" stroke="#fff" stroke-width="1" />
<line x1="591.60" y1="360.80" x2="593.60" y2="360.80" stroke="#fff" stroke-width="1" />
<line x1="575.90" y1="355.75" x2="577.90" y2="355.75" stroke="#fff" stroke-width="1" />
<line x1="591.60" y1="355.75" x2="593.60" y2="355.75" stroke="#fff" stroke-width="1" />
<line x1="575.90" y1="350.70" x2="577.90" y2="350.70" stroke="#fff" stroke-width="1" />
<line x1="591.60" y1="350.70" x2="594.80" y2="350.70" stroke="#fff" stroke-width="1" />
<line x1="575.90" y1="345.65" x2="577.90" y2="345.65" stroke="#fff" stroke-width="1" />
<line x1="591.60" y1="345.65" x2="593.60" y2="345.65" stroke="#fff" stroke-width="1" />
<line x1="574.70" y1="340.60" x2="577.90" y2="340.60" stroke="#fff" stroke-width="1" />
<line x1="591.60" y1="340.60" x2="593.60" y2="340.60" stroke="#fff" stroke-width="1" />
<line x1="575.90" y1="335.55" x2="577.90" y2="335.55" stroke="#fff" stroke-width="1" />
<line x1="591.60" y1="335.55" x2="593.60" y2="335.55" stroke="#fff" stroke-width="1" />
<line x1="575.90" y1="330.50" x2="577.90" y2="330.50" stroke="#fff" stroke-width="1" />
<line x1="591.60" y1="330.50" x2="594.80" y2="330.50" stroke="#fff" stroke-width="1" />
<line x1="575.90" y1="325.45" x2="577.90" y2="325.45" stroke="#fff" stroke-width="1" />
<line x1="591.60" y1="325.45" x2="593.60" y2="325.45" stroke="#fff" stroke-width="1" />
<line x1="574.70" y1="320.40" x2="577.90" y2="320.40" stroke="#fff" stroke-width="1" />
<line x1="591.60" y1="320.40" x2="593.60" y2="320.40" stroke="#fff" stroke-width="1" />
<line x1="575.90" y1="315.35" x2="577.90" y2="315.35" stroke="#fff" stroke-width="1" />
<line x1="591.60" y1="315.35" x2="593.60" y2="315.35" stroke="#fff" stroke-width="1" />
<line x1="575.90" y1="310.30" x2="577.90" y2="310.30" stroke="#fff" stroke-width="1" />
<line x1="591.60" y1="310.30" x2="594.80" y2="310.30" stroke="#fff" stroke-width="1" />
<line x1="575.90" y1="305.25" x2="577.90" y2="305.25" stroke="#fff" stroke-width="1" />
<line x1="591.60" y1="305.25" x2="593.60" y2="305.25" stroke="#fff" stroke-width="1" />
<line x1="574.70" y1="300.20" x2="577.90" y2="300.20" stroke="#fff" stroke-width="1" />
<line x1="591.60" y1="300.20" x2="593.60" y2="300.20" stroke="#fff" stroke-width="1" />
<line x1="575.90" y1="295.15" x2="577.90" y2="295.15" stroke="#fff" stroke-width="1" />
<line x1="591.60" y1="295.15" x2="593.60" y2="295.15" stroke="#fff" stroke-width="1" />
<line x1="575.90" y1="290.10" x2="577.90" y2="290.10" stroke="#fff" stroke-width="1" />
<line x1="591.60" y1="290.10" x2="594.80" y2="290.10" stroke="#fff" stroke-width="1" />
<line x1="575.90" y1="285.05" x2="577.90" y2="285.05" stroke="#fff" stroke-width="1" />
<line x1="591.60" y1="285.05" x2="593.60" y2="285.05" stroke="#fff" stroke-width="1" />
<line x1="574.70" y1="280.00" x2="577.90" y2="280.00" stroke="#fff" stroke-width="1" />
<line x1="591.60" y1="280.00" x2="593.60" y2="280.00" stroke="#fff" stroke-width="1" />
<text x="569.4" y="384.5" font-size="9.6" fill="#e8e8e8" text-anchor="middle" >-10</text>
<text x="569.4" y="364.3" font-size="9.6" fill="#e8e8e8" text-anchor="middle" >-6</text>
<text x="569.4" y="344.1" font-size="9.6" fill="#e8e8e8" text-anchor="middle" >-2</text>
<text x="569.4" y="323.9" font-size="9.6" fill="#e8e8e8" text-anchor="middle" >2</text>
<text x="569.4" y="303.7" font-size="9.6" fill="#e8e8e8" text-anchor="middle" >6</text>
<text x="569.4" y="283.5" font-size="9.6" fill="#e8e8e8" text-anchor="middle" >10</text>
<text x="597.6" y="374.4" font-size="9.6" fill="#e8e8e8" text-anchor="middle" >-8</text>
<text x="597.6" y="354.2" font-size="9.6" fill="#e8e8e8" text-anchor="middle" >-4</text>
<text x="597.6" y="334.0" font-size="9.6" fill="#e8e8e8" text-anchor="middle" >0</text>
<text x="597.6" y="313.8" font-size="9.6" fill="#e8e8e8" text-anchor="middle" >4</text>
<text x="597.6" y="293.6" font-size="9.6" fill="#e8e8e8" text-anchor="middle" >8</text>
<path d="M577.40 330.50 L584.75 327.90 L592.10 330.50 L584.75 333.10 Z" fill="#909000" stroke="#e8e800" stroke-width="0.9"/>
<text x="637.9" y="235.7" font-size="10.4" fill="#e0e0e0" text-anchor="middle" textLength="44.0" lengthAdjust="spacingAndGlyphs" >LONGFT2</text>
<text x="638.9" y="250.8" font-size="11" fill="#d8d8d8" text-anchor="middle" >0%</text>
<rect x="614.90" y="254.30" width="15.20" height="7.40" fill="#008000" />
<text x="622.5" y="260.0" font-size="5.6" fill="#00f000" text-anchor="middle" textLength="13.7" lengthAdjust="spacingAndGlyphs" >Min: 0</text>
<rect x="630.10" y="254.30" width="15.20" height="7.40" fill="#0000a0" />
<text x="637.7" y="260.0" font-size="5.6" fill="#1414ff" text-anchor="middle" textLength="13.7" lengthAdjust="spacingAndGlyphs" >Avg: 0</text>
<rect x="645.30" y="254.30" width="15.20" height="7.40" fill="#880000" />
<text x="652.9" y="260.0" font-size="5.6" fill="#ff0808" text-anchor="middle" textLength="13.7" lengthAdjust="spacingAndGlyphs" >Max: 0</text>
<rect x="630.60" y="268.50" width="13.70" height="124.90" fill="#404040" />
<rect x="630.60" y="268.50" width="13.70" height="124.90" fill="none" stroke="#fff" stroke-width="1.3"/>
<line x1="627.40" y1="381.00" x2="630.60" y2="381.00" stroke="#fff" stroke-width="1" />
<line x1="644.30" y1="381.00" x2="646.30" y2="381.00" stroke="#fff" stroke-width="1" />
<line x1="628.60" y1="375.95" x2="630.60" y2="375.95" stroke="#fff" stroke-width="1" />
<line x1="644.30" y1="375.95" x2="646.30" y2="375.95" stroke="#fff" stroke-width="1" />
<line x1="628.60" y1="370.90" x2="630.60" y2="370.90" stroke="#fff" stroke-width="1" />
<line x1="644.30" y1="370.90" x2="647.50" y2="370.90" stroke="#fff" stroke-width="1" />
<line x1="628.60" y1="365.85" x2="630.60" y2="365.85" stroke="#fff" stroke-width="1" />
<line x1="644.30" y1="365.85" x2="646.30" y2="365.85" stroke="#fff" stroke-width="1" />
<line x1="627.40" y1="360.80" x2="630.60" y2="360.80" stroke="#fff" stroke-width="1" />
<line x1="644.30" y1="360.80" x2="646.30" y2="360.80" stroke="#fff" stroke-width="1" />
<line x1="628.60" y1="355.75" x2="630.60" y2="355.75" stroke="#fff" stroke-width="1" />
<line x1="644.30" y1="355.75" x2="646.30" y2="355.75" stroke="#fff" stroke-width="1" />
<line x1="628.60" y1="350.70" x2="630.60" y2="350.70" stroke="#fff" stroke-width="1" />
<line x1="644.30" y1="350.70" x2="647.50" y2="350.70" stroke="#fff" stroke-width="1" />
<line x1="628.60" y1="345.65" x2="630.60" y2="345.65" stroke="#fff" stroke-width="1" />
<line x1="644.30" y1="345.65" x2="646.30" y2="345.65" stroke="#fff" stroke-width="1" />
<line x1="627.40" y1="340.60" x2="630.60" y2="340.60" stroke="#fff" stroke-width="1" />
<line x1="644.30" y1="340.60" x2="646.30" y2="340.60" stroke="#fff" stroke-width="1" />
<line x1="628.60" y1="335.55" x2="630.60" y2="335.55" stroke="#fff" stroke-width="1" />
<line x1="644.30" y1="335.55" x2="646.30" y2="335.55" stroke="#fff" stroke-width="1" />
<line x1="628.60" y1="330.50" x2="630.60" y2="330.50" stroke="#fff" stroke-width="1" />
<line x1="644.30" y1="330.50" x2="647.50" y2="330.50" stroke="#fff" stroke-width="1" />
<line x1="628.60" y1="325.45" x2="630.60" y2="325.45" stroke="#fff" stroke-width="1" />
<line x1="644.30" y1="325.45" x2="646.30" y2="325.45" stroke="#fff" stroke-width="1" />
<line x1="627.40" y1="320.40" x2="630.60" y2="320.40" stroke="#fff" stroke-width="1" />
<line x1="644.30" y1="320.40" x2="646.30" y2="320.40" stroke="#fff" stroke-width="1" />
<line x1="628.60" y1="315.35" x2="630.60" y2="315.35" stroke="#fff" stroke-width="1" />
<line x1="644.30" y1="315.35" x2="646.30" y2="315.35" stroke="#fff" stroke-width="1" />
<line x1="628.60" y1="310.30" x2="630.60" y2="310.30" stroke="#fff" stroke-width="1" />
<line x1="644.30" y1="310.30" x2="647.50" y2="310.30" stroke="#fff" stroke-width="1" />
<line x1="628.60" y1="305.25" x2="630.60" y2="305.25" stroke="#fff" stroke-width="1" />
<line x1="644.30" y1="305.25" x2="646.30" y2="305.25" stroke="#fff" stroke-width="1" />
<line x1="627.40" y1="300.20" x2="630.60" y2="300.20" stroke="#fff" stroke-width="1" />
<line x1="644.30" y1="300.20" x2="646.30" y2="300.20" stroke="#fff" stroke-width="1" />
<line x1="628.60" y1="295.15" x2="630.60" y2="295.15" stroke="#fff" stroke-width="1" />
<line x1="644.30" y1="295.15" x2="646.30" y2="295.15" stroke="#fff" stroke-width="1" />
<line x1="628.60" y1="290.10" x2="630.60" y2="290.10" stroke="#fff" stroke-width="1" />
<line x1="644.30" y1="290.10" x2="647.50" y2="290.10" stroke="#fff" stroke-width="1" />
<line x1="628.60" y1="285.05" x2="630.60" y2="285.05" stroke="#fff" stroke-width="1" />
<line x1="644.30" y1="285.05" x2="646.30" y2="285.05" stroke="#fff" stroke-width="1" />
<line x1="627.40" y1="280.00" x2="630.60" y2="280.00" stroke="#fff" stroke-width="1" />
<line x1="644.30" y1="280.00" x2="646.30" y2="280.00" stroke="#fff" stroke-width="1" />
<text x="622.1" y="384.5" font-size="9.6" fill="#e8e8e8" text-anchor="middle" >-10</text>
<text x="622.1" y="364.3" font-size="9.6" fill="#e8e8e8" text-anchor="middle" >-6</text>
<text x="622.1" y="344.1" font-size="9.6" fill="#e8e8e8" text-anchor="middle" >-2</text>
<text x="622.1" y="323.9" font-size="9.6" fill="#e8e8e8" text-anchor="middle" >2</text>
<text x="622.1" y="303.7" font-size="9.6" fill="#e8e8e8" text-anchor="middle" >6</text>
<text x="622.1" y="283.5" font-size="9.6" fill="#e8e8e8" text-anchor="middle" >10</text>
<text x="650.3" y="374.4" font-size="9.6" fill="#e8e8e8" text-anchor="middle" >-8</text>
<text x="650.3" y="354.2" font-size="9.6" fill="#e8e8e8" text-anchor="middle" >-4</text>
<text x="650.3" y="334.0" font-size="9.6" fill="#e8e8e8" text-anchor="middle" >0</text>
<text x="650.3" y="313.8" font-size="9.6" fill="#e8e8e8" text-anchor="middle" >4</text>
<text x="650.3" y="293.6" font-size="9.6" fill="#e8e8e8" text-anchor="middle" >8</text>
<path d="M630.10 330.50 L637.45 327.90 L644.80 330.50 L637.45 333.10 Z" fill="#909000" stroke="#e8e800" stroke-width="0.9"/>
<path d="M95.10 257.55 L97.96 256.45 L100.96 255.42 L104.09 254.46 L107.36 253.57 L110.74 252.76 L114.23 252.02 L117.81 251.37 L121.48 250.80 L119.17 248.11 L115.13 248.74 L111.19 249.45 L107.35 250.26 L103.63 251.16 L100.04 252.13 L96.59 253.19 L93.29 254.32 L90.15 255.53 Z" fill="#008000"/>
<path d="M174.97 252.02 L175.85 252.20 L176.73 252.38 L177.60 252.57 L178.46 252.76 L179.32 252.95 L180.17 253.15 L181.01 253.36 L181.84 253.57 L185.57 251.16 L184.65 250.92 L183.72 250.70 L182.79 250.48 L181.85 250.26 L180.90 250.05 L179.94 249.85 L178.98 249.65 L178.01 249.45 Z" fill="#ff8000"/>
<path d="M181.84 253.57 L183.24 253.94 L184.63 254.32 L185.98 254.71 L187.32 255.12 L188.63 255.54 L189.91 255.98 L191.17 256.42 L192.40 256.88 L197.18 254.80 L195.83 254.29 L194.44 253.80 L193.03 253.33 L191.59 252.86 L190.12 252.42 L188.63 251.98 L187.11 251.56 L185.57 251.16 Z" fill="#ff0000"/>
<path d="M95.10 257.55 A70.0 28.5 0 0 1 194.10 257.55" fill="none" stroke="#fff" stroke-width="1.5"/>
<line x1="95.10" y1="257.55" x2="86.19" y2="253.92" stroke="#fff" stroke-width="1.3" />
<text x="78.1" y="253.5" font-size="7.6" fill="#e8e8e8" text-anchor="middle" >0</text>
<line x1="100.96" y1="255.42" x2="98.34" y2="254.08" stroke="#e0e0e0" stroke-width="0.8" />
<line x1="107.36" y1="253.57" x2="100.65" y2="249.22" stroke="#fff" stroke-width="1.3" />
<text x="94.5" y="248.2" font-size="7.6" fill="#e8e8e8" text-anchor="middle" >20</text>
<line x1="114.23" y1="252.02" x2="112.41" y2="250.48" stroke="#e0e0e0" stroke-width="0.8" />
<line x1="121.48" y1="250.80" x2="117.32" y2="245.96" stroke="#fff" stroke-width="1.3" />
<text x="113.3" y="244.5" font-size="7.6" fill="#e8e8e8" text-anchor="middle" >40</text>
<line x1="129.02" y1="249.91" x2="128.09" y2="248.25" stroke="#e0e0e0" stroke-width="0.8" />
<line x1="136.76" y1="249.38" x2="135.35" y2="244.28" stroke="#fff" stroke-width="1.3" />
<text x="132.9" y="242.6" font-size="7.6" fill="#e8e8e8" text-anchor="middle" >60</text>
<line x1="144.60" y1="249.20" x2="144.60" y2="247.49" stroke="#e0e0e0" stroke-width="0.8" />
<line x1="152.44" y1="249.38" x2="153.85" y2="244.28" stroke="#fff" stroke-width="1.3" />
<text x="153.9" y="242.6" font-size="7.6" fill="#e8e8e8" text-anchor="middle" >80</text>
<line x1="160.18" y1="249.91" x2="161.11" y2="248.25" stroke="#e0e0e0" stroke-width="0.8" />
<line x1="167.72" y1="250.80" x2="171.88" y2="245.96" stroke="#fff" stroke-width="1.3" />
<text x="173.2" y="244.5" font-size="7.6" fill="#e8e8e8" text-anchor="middle" >100</text>
<line x1="174.97" y1="252.02" x2="176.79" y2="250.48" stroke="#e0e0e0" stroke-width="0.8" />
<line x1="181.84" y1="253.57" x2="188.55" y2="249.22" stroke="#fff" stroke-width="1.3" />
<text x="192.0" y="248.2" font-size="7.6" fill="#e8e8e8" text-anchor="middle" >120</text>
<line x1="188.24" y1="255.42" x2="190.86" y2="254.08" stroke="#e0e0e0" stroke-width="0.8" />
<line x1="194.10" y1="257.55" x2="203.01" y2="253.92" stroke="#fff" stroke-width="1.3" />
<text x="208.4" y="253.5" font-size="7.6" fill="#e8e8e8" text-anchor="middle" >140</text>
<text x="144.6" y="260.4" font-size="4.7" fill="#fff" text-anchor="middle" font-weight="bold" >ECT</text>
<text x="151.3" y="230.4" font-size="7.2" fill="#e0e0e0" text-anchor="end" >106°C</text>
<rect x="172.70" y="223.90" width="42.20" height="6.70" fill="#800000" />
<text x="193.8" y="229.3" font-size="4.8" fill="#ff1010" text-anchor="middle" font-weight="bold" >Max: 106</text>
<path d="M171.84 251.76 L141.00 277.10 L148.20 277.10 Z" fill="#8c8c00" stroke="#e8e800" stroke-width="0.9" stroke-linejoin="round"/>
<path d="M95.10 328.85 A70.0 28.5 0 0 1 194.10 328.85" fill="none" stroke="#fff" stroke-width="1.5"/>
<line x1="95.10" y1="328.85" x2="86.19" y2="325.22" stroke="#fff" stroke-width="1.3" />
<text x="78.1" y="324.8" font-size="7.6" fill="#e8e8e8" text-anchor="middle" >0</text>
<line x1="100.96" y1="326.72" x2="98.34" y2="325.38" stroke="#e0e0e0" stroke-width="0.8" />
<line x1="107.36" y1="324.87" x2="100.65" y2="320.52" stroke="#fff" stroke-width="1.3" />
<text x="94.5" y="319.5" font-size="7.6" fill="#e8e8e8" text-anchor="middle" >20</text>
<line x1="114.23" y1="323.32" x2="112.41" y2="321.78" stroke="#e0e0e0" stroke-width="0.8" />
<line x1="121.48" y1="322.10" x2="117.32" y2="317.26" stroke="#fff" stroke-width="1.3" />
<text x="113.3" y="315.8" font-size="7.6" fill="#e8e8e8" text-anchor="middle" >40</text>
<line x1="129.02" y1="321.21" x2="128.09" y2="319.55" stroke="#e0e0e0" stroke-width="0.8" />
<line x1="136.76" y1="320.68" x2="135.35" y2="315.58" stroke="#fff" stroke-width="1.3" />
<text x="132.9" y="313.9" font-size="7.6" fill="#e8e8e8" text-anchor="middle" >60</text>
<line x1="144.60" y1="320.50" x2="144.60" y2="318.79" stroke="#e0e0e0" stroke-width="0.8" />
<line x1="152.44" y1="320.68" x2="153.85" y2="315.58" stroke="#fff" stroke-width="1.3" />
<text x="153.9" y="313.9" font-size="7.6" fill="#e8e8e8" text-anchor="middle" >80</text>
<line x1="160.18" y1="321.21" x2="161.11" y2="319.55" stroke="#e0e0e0" stroke-width="0.8" />
<line x1="167.72" y1="322.10" x2="171.88" y2="317.26" stroke="#fff" stroke-width="1.3" />
<text x="173.2" y="315.8" font-size="7.6" fill="#e8e8e8" text-anchor="middle" >100</text>
<line x1="174.97" y1="323.32" x2="176.79" y2="321.78" stroke="#e0e0e0" stroke-width="0.8" />
<line x1="181.84" y1="324.87" x2="188.55" y2="320.52" stroke="#fff" stroke-width="1.3" />
<text x="192.0" y="319.5" font-size="7.6" fill="#e8e8e8" text-anchor="middle" >120</text>
<line x1="188.24" y1="326.72" x2="190.86" y2="325.38" stroke="#e0e0e0" stroke-width="0.8" />
<line x1="194.10" y1="328.85" x2="203.01" y2="325.22" stroke="#fff" stroke-width="1.3" />
<text x="208.4" y="324.8" font-size="7.6" fill="#e8e8e8" text-anchor="middle" >140</text>
<text x="144.6" y="331.7" font-size="4.7" fill="#fff" text-anchor="middle" font-weight="bold" >IAT</text>
<text x="151.3" y="301.7" font-size="7.2" fill="#e0e0e0" text-anchor="end" >44°C</text>
<rect x="172.70" y="295.20" width="42.20" height="6.70" fill="#800000" />
<text x="193.8" y="300.6" font-size="4.8" fill="#ff1010" text-anchor="middle" font-weight="bold" >Max: 44</text>
<path d="M124.67 321.98 L141.00 348.40 L148.20 348.40 Z" fill="#8c8c00" stroke="#e8e800" stroke-width="0.9" stroke-linejoin="round"/>
<text x="122.9" y="373.8" font-size="7.0" fill="#f0f0f0" text-anchor="middle" >Throttle</text>
<text x="192.2" y="373.8" font-size="7.0" fill="#e0e0e0" text-anchor="middle" >71 %</text>
<rect x="80.00" y="380.60" width="127.80" height="11.10" fill="#404040" />
<rect x="86.60" y="380.60" width="80.72" height="11.10" fill="#808000" />
<rect x="80" y="380.6" width="127.8" height="11.1" fill="none" stroke="#fff" stroke-width="1.3"/>
<line x1="85.60" y1="378.40" x2="85.60" y2="380.60" stroke="#fff" stroke-width="1" />
<line x1="85.60" y1="391.70" x2="85.60" y2="394.00" stroke="#fff" stroke-width="1" />
<text x="85.6" y="401.6" font-size="6.6" fill="#f0f0f0" text-anchor="middle" >0</text>
<line x1="97.11" y1="378.40" x2="97.11" y2="380.60" stroke="#fff" stroke-width="1" />
<line x1="97.11" y1="391.70" x2="97.11" y2="394.00" stroke="#fff" stroke-width="1" />
<text x="97.1" y="401.6" font-size="6.6" fill="#f0f0f0" text-anchor="middle" >10</text>
<line x1="108.62" y1="378.40" x2="108.62" y2="380.60" stroke="#fff" stroke-width="1" />
<line x1="108.62" y1="391.70" x2="108.62" y2="394.00" stroke="#fff" stroke-width="1" />
<text x="108.6" y="401.6" font-size="6.6" fill="#f0f0f0" text-anchor="middle" >20</text>
<line x1="120.13" y1="378.40" x2="120.13" y2="380.60" stroke="#fff" stroke-width="1" />
<line x1="120.13" y1="391.70" x2="120.13" y2="394.00" stroke="#fff" stroke-width="1" />
<text x="120.1" y="401.6" font-size="6.6" fill="#f0f0f0" text-anchor="middle" >30</text>
<line x1="131.64" y1="378.40" x2="131.64" y2="380.60" stroke="#fff" stroke-width="1" />
<line x1="131.64" y1="391.70" x2="131.64" y2="394.00" stroke="#fff" stroke-width="1" />
<text x="131.6" y="401.6" font-size="6.6" fill="#f0f0f0" text-anchor="middle" >40</text>
<line x1="143.15" y1="378.40" x2="143.15" y2="380.60" stroke="#fff" stroke-width="1" />
<line x1="143.15" y1="391.70" x2="143.15" y2="394.00" stroke="#fff" stroke-width="1" />
<text x="143.2" y="401.6" font-size="6.6" fill="#f0f0f0" text-anchor="middle" >50</text>
<line x1="154.66" y1="378.40" x2="154.66" y2="380.60" stroke="#fff" stroke-width="1" />
<line x1="154.66" y1="391.70" x2="154.66" y2="394.00" stroke="#fff" stroke-width="1" />
<text x="154.7" y="401.6" font-size="6.6" fill="#f0f0f0" text-anchor="middle" >60</text>
<line x1="166.17" y1="378.40" x2="166.17" y2="380.60" stroke="#fff" stroke-width="1" />
<line x1="166.17" y1="391.70" x2="166.17" y2="394.00" stroke="#fff" stroke-width="1" />
<text x="166.2" y="401.6" font-size="6.6" fill="#f0f0f0" text-anchor="middle" >70</text>
<line x1="177.68" y1="378.40" x2="177.68" y2="380.60" stroke="#fff" stroke-width="1" />
<line x1="177.68" y1="391.70" x2="177.68" y2="394.00" stroke="#fff" stroke-width="1" />
<text x="177.7" y="401.6" font-size="6.6" fill="#f0f0f0" text-anchor="middle" >80</text>
<line x1="189.19" y1="378.40" x2="189.19" y2="380.60" stroke="#fff" stroke-width="1" />
<line x1="189.19" y1="391.70" x2="189.19" y2="394.00" stroke="#fff" stroke-width="1" />
<text x="189.2" y="401.6" font-size="6.6" fill="#f0f0f0" text-anchor="middle" >90</text>
<line x1="200.70" y1="378.40" x2="200.70" y2="380.60" stroke="#fff" stroke-width="1" />
<line x1="200.70" y1="391.70" x2="200.70" y2="394.00" stroke="#fff" stroke-width="1" />
<text x="200.7" y="401.6" font-size="6.6" fill="#f0f0f0" text-anchor="middle" >100</text>
<path d="M135.09 380.2 L136.69 386.15 L135.09 392.1 L133.49 386.15 Z" fill="#0000c0" stroke="#2020ff" stroke-width="0.8"/>
<path d="M167.32 380.2 L168.92 386.15 L167.32 392.1 L165.72 386.15 Z" fill="#909000" stroke="#e8e800" stroke-width="0.8"/>
<path d="M200.24 380.2 L201.84 386.15 L200.24 392.1 L198.64 386.15 Z" fill="#a00000" stroke="#e00000" stroke-width="0.8"/>
<text x="79.8" y="435.6" font-size="8" fill="#000" text-anchor="middle" >0</text>
<text x="658.4" y="435.7" font-size="8" fill="#000" text-anchor="middle" >162</text>
<rect x="93.80" y="431.20" width="545.60" height="1.00" fill="#7a7a7a" />
<rect x="93.80" y="432.20" width="545.60" height="1.20" fill="#ffffff" />
<path d="M104.8 426.4 H111.2 V437.2 L108 440.4 L104.8 437.2 Z" fill="#d8d5ce" stroke="none"/>
<path d="M104.8 437.2 V426.4 H111.2" fill="none" stroke="#fff" stroke-width="0.9"/>
<path d="M111.2 426.4 V437.2 L108 440.4 L104.8 437.2" fill="none" stroke="#505050" stroke-width="0.9"/>
<g id="icons">
<!-- Connection Info: plug -->
<g>
<path d="M40.8 17 C41.2 21 40 22.6 37 22.9 L31 23.4 C29.2 23.6 28.9 24.6 28.7 27.6" fill="none" stroke="#1a1a1a" stroke-width="3" stroke-linecap="butt"/>
<path d="M39.9 16.6 C40.2 20.4 39.2 21.8 36.4 22.1 L30.4 22.6 C28.4 22.8 27.9 24 27.7 27.4" fill="none" stroke="#f4f4f4" stroke-width="2.4" stroke-linecap="butt"/>
<rect x="35.6" y="10.6" width="10" height="6.8" rx="1" fill="#1a1a1a"/>
<rect x="34.9" y="10.2" width="9.8" height="6.4" rx="1" fill="#d4d4d4"/>
<rect x="35.6" y="11" width="4" height="5" fill="#ececec"/>
<rect x="33.6" y="7.4" width="12.8" height="3.6" rx="1.4" fill="#f2f2f2"/>
<rect x="34.4" y="9.6" width="11.4" height="1.2" fill="#b8b8b8"/>
<path d="M34.6 6.9 H44.8" stroke="#e8e000" stroke-width="1.1" stroke-dasharray="1.5 0.6" fill="none"/>
</g>
<!-- Vehicle Info: selected frame + yellow car -->
<g>
<rect x="24.2" y="45" width="24.6" height="23.4" fill="#8e8e8e"/>
<path d="M24.2 68.4 V45 H48.8" fill="none" stroke="#f0f0f0" stroke-width="1.1"/>
<path d="M48.8 45 V68.4 H24.2" fill="none" stroke="#3c3c3c" stroke-width="1.1"/>
<!-- car -->
<rect x="28.6" y="63.4" width="3.2" height="3.4" fill="#101010"/>
<rect x="41.6" y="63.4" width="3.2" height="3.4" fill="#101010"/>
<path d="M30.4 52 H42.6 L44.4 56 H28.6 Z" fill="#e8e000"/>
<path d="M31.4 52.9 H41.6 L42.8 55.6 H30.2 Z" fill="#6c6c50"/>
<rect x="26.8" y="55.8" width="19.4" height="8.4" rx="1.6" fill="#f4ec00"/>
<rect x="30.8" y="59.6" width="11.4" height="2.4" fill="#181818"/>
<rect x="28.4" y="59.4" width="3.2" height="2.2" rx="0.8" fill="#ffffff"/>
<rect x="41.4" y="59.4" width="3.2" height="2.2" rx="0.8" fill="#ffffff"/>
<rect x="27.6" y="62.6" width="17.8" height="1.2" fill="#a09800"/>
<!-- doc -->
<rect x="40" y="46.8" width="6.6" height="6.8" fill="#f4f4f4" stroke="#303030" stroke-width="0.8"/>
<rect x="41.2" y="48.4" width="2.6" height="0.9" fill="#303030"/>
<rect x="41.2" y="50.2" width="4" height="0.9" fill="#303030"/>
<rect x="41.2" y="51.8" width="4" height="0.7" fill="#505050"/>
</g>
<!-- Dashboard A: round gauge -->
<g>
<circle cx="35.8" cy="96.1" r="11.3" fill="#e4e4e4"/>
<circle cx="35.8" cy="96.1" r="10.2" fill="none" stroke="#6a6a6a" stroke-width="0.7"/>
<circle cx="35.8" cy="96.1" r="9.3" fill="#080808"/>
<circle cx="35.8" cy="96.1" r="7.4" fill="none" stroke="#3a3a3a" stroke-width="0.8" stroke-dasharray="1 1.4"/>
<rect x="34.6" y="100.6" width="2.6" height="1" fill="#909090"/>
<rect x="35.2" y="91" width="1.2" height="0.9" fill="#50a050"/>
<path d="M36 96 L31.2 100.8" stroke="#ff1010" stroke-width="1.1"/>
<circle cx="35.9" cy="96" r="1.2" fill="#ff2020"/>
</g>
<!-- Dashboard B: 3D bars -->
<g>
<path d="M26.4 134.4 L31.4 128 V139.6 L26.4 145.4 Z" fill="#d2d2d2" stroke="#505050" stroke-width="0.6"/>
<path d="M26.4 145.4 L31.4 139.8 L46 139.8 L42 145.2 Z" fill="#b0b0b0" stroke="#404040" stroke-width="0.6"/>
<path d="M27 146 L43 145.6 L46.6 140.4" fill="none" stroke="#202020" stroke-width="1"/>
<rect x="29.4" y="135.6" width="3.8" height="8.4" rx="0.9" fill="#1818d8"/>
<rect x="32.4" y="135.6" width="1" height="8.4" fill="#0a0a80"/>
<ellipse cx="31.3" cy="135.6" rx="1.9" ry="0.8" fill="#5050ff"/>
<rect x="33.8" y="129" width="5" height="14.8" rx="1" fill="#f01010"/>
<rect x="37.8" y="129" width="1.1" height="14.8" fill="#900000"/>
<ellipse cx="36.3" cy="129" rx="2.5" ry="0.9" fill="#ff6060"/>
<rect x="39.8" y="132" width="4.6" height="11.4" rx="1" fill="#18c040"/>
<rect x="43.4" y="132" width="1" height="11.4" fill="#0a7020"/>
<ellipse cx="42.1" cy="132" rx="2.3" ry="0.8" fill="#70e080"/>
</g>
<!-- Dashboard C: table + chart -->
<g>
<rect x="25.6" y="165.2" width="14" height="14" fill="#f8f8f8" stroke="#202020" stroke-width="0.7"/>
<rect x="25.6" y="165.2" width="14" height="1.8" fill="#181870"/>
<path d="M25.6 169.2 H39.6 M25.6 171.6 H39.6 M25.6 174 H39.6 M25.6 176.4 H39.6 M29 167 V179.2 M34.4 167 V179.2" stroke="#282828" stroke-width="0.7" fill="none"/>
<rect x="31.2" y="174.6" width="15.6" height="10.2" fill="#fafafa" stroke="#202020" stroke-width="0.8"/>
<rect x="31.2" y="174.6" width="15.6" height="1.8" fill="#2020a0"/>
<path d="M32.8 180 L35.4 178.4 L38 180.4 L41 178.6 L44.8 179.4" stroke="#f02020" stroke-width="0.9" fill="none"/>
<path d="M32.8 181.6 L36 180.6 L39.4 182 L42 180.2 L45 181" stroke="#e8d000" stroke-width="0.9" fill="none"/>
<path d="M32.8 183.4 L36.4 182.8 L40 183.6 L45 182.6" stroke="#20b020" stroke-width="0.9" fill="none"/>
</g>
<!-- Dashboard D: composite -->
<g>
<rect x="34.4" y="205.4" width="12.4" height="8" fill="#101010" stroke="#e0e0e0" stroke-width="0.7"/>
<path d="M35.4 210.4 L38 207.6 L40.6 211 L43.2 208 L45.8 209.6" stroke="#f02020" stroke-width="0.9" fill="none"/>
<path d="M35.4 211.8 L38.6 211.2 L41.4 209.4 L45.8 206.8" stroke="#20d020" stroke-width="0.9" fill="none"/>
<rect x="27.2" y="208.4" width="7" height="8.8" fill="#f4f4f4" stroke="#303030" stroke-width="0.6"/>
<rect x="29.2" y="210.4" width="1.2" height="6.4" fill="#303030"/>
<rect x="31.8" y="211.8" width="1.2" height="5" fill="#303030"/>
<path d="M25.6 223.8 A4.8 4.8 0 0 1 35 223.8 L32.6 223.8 L30.3 221 L28 223.8 Z" fill="#f6f6f6" stroke="#404040" stroke-width="0.5"/>
<path d="M30.3 222 L32.8 218.6" stroke="#ff2020" stroke-width="0.9"/>
<rect x="36.6" y="216.4" width="9.6" height="8.8" fill="#e0e020" stroke="#303030" stroke-width="0.5"/>
<rect x="36.6" y="216.4" width="3.2" height="3" fill="#20c020"/>
<rect x="39.8" y="219.4" width="3.2" height="3" fill="#20c020"/>
<rect x="43" y="216.4" width="3.2" height="3" fill="#f03020"/>
<rect x="43" y="222.2" width="3.2" height="3" fill="#f03020"/>
<rect x="39.8" y="222.2" width="3.2" height="3" fill="#f03020"/>
<rect x="36.6" y="222.2" width="3.2" height="3" fill="#20c020"/>
</g>
<!-- Data View: two tables -->
<g transform="translate(0,1.2)">
<rect x="32.6" y="248.8" width="13.4" height="8.8" fill="#f4f4f4" stroke="#303030" stroke-width="0.7"/>
<rect x="32.6" y="248.8" width="13.4" height="2" fill="#1818a0"/>
<path d="M36 250.8 V257.6 M39.4 250.8 V257.6 M42.8 250.8 V257.6 M32.6 253 H46 M32.6 255.2 H46" stroke="#404040" stroke-width="0.7" fill="none"/>
<rect x="27" y="252.8" width="13.4" height="9.4" rx="1" fill="#f4f4f4" stroke="#303030" stroke-width="0.7"/>
<rect x="27" y="252.8" width="13.4" height="2" fill="#1818a0"/>
<path d="M30.4 254.8 V262.2 M33.8 254.8 V262.2 M37.2 254.8 V262.2 M27 257.2 H40.4 M27 259.6 H40.4" stroke="#404040" stroke-width="0.7" fill="none"/>
</g>
<!-- Trouble Codes: red car + warning -->
<g transform="translate(0,0.8)">
<rect x="28.6" y="302.2" width="3.4" height="2.8" fill="#101010"/>
<rect x="41.6" y="302.2" width="3.4" height="2.8" fill="#101010"/>
<path d="M30.6 291.6 H42.4 L44.4 295.6 H28.6 Z" fill="#e01010"/>
<path d="M31.6 292.6 H41.4 L42.6 295.2 H30.4 Z" fill="#707070"/>
<rect x="27" y="295.2" width="19.2" height="7.6" rx="1.6" fill="#f01010"/>
<rect x="31" y="298.6" width="11.2" height="2.2" fill="#181818"/>
<rect x="28.6" y="298.4" width="3" height="2" rx="0.7" fill="#ffffff"/>
<rect x="41.6" y="298.4" width="3" height="2" rx="0.7" fill="#ffffff"/>
<path d="M32.8 284.6 H45.4 L39.6 296.4 Z" fill="#e8e040" stroke="#404020" stroke-width="0.7" stroke-linejoin="round"/>
<rect x="38.8" y="286.2" width="1.6" height="4.6" fill="#101010"/>
<rect x="38.8" y="291.8" width="1.6" height="1.5" fill="#101010"/>
</g>
<!-- PID Config: black framed table -->
<g>
<rect x="24.8" y="327" width="22.6" height="15.4" fill="#080808"/>
<rect x="27.8" y="328.6" width="18.4" height="11.6" fill="#f4f4f4"/>
<path d="M28.8 330.4 H45.6 M28.8 332.6 H45.6 M28.8 334.8 H45.6 M28.8 337 H45.6 M28.8 339 H45.6" stroke="#181818" stroke-width="1" stroke-dasharray="3.6 1.3" fill="none"/>
</g>
</g>

<text x="36.1" y="40.7" font-size="8.8" fill="#6c6c6c" text-anchor="middle" textLength="50.0" lengthAdjust="spacingAndGlyphs" >Connection Info</text>
<text x="35.6" y="40.2" font-size="8.8" fill="#ffffff" text-anchor="middle" textLength="50.0" lengthAdjust="spacingAndGlyphs" >Connection Info</text>
<text x="36.1" y="80.1" font-size="8.8" fill="#6c6c6c" text-anchor="middle" textLength="37.5" lengthAdjust="spacingAndGlyphs" >Vehicle Info</text>
<text x="35.6" y="79.6" font-size="8.8" fill="#ffffff" text-anchor="middle" textLength="37.5" lengthAdjust="spacingAndGlyphs" >Vehicle Info</text>
<text x="36.1" y="119.7" font-size="8.8" fill="#6c6c6c" text-anchor="middle" textLength="42.2" lengthAdjust="spacingAndGlyphs" >Dashboard A</text>
<text x="35.6" y="119.2" font-size="8.8" fill="#ffffff" text-anchor="middle" textLength="42.2" lengthAdjust="spacingAndGlyphs" >Dashboard A</text>
<text x="36.1" y="159.3" font-size="8.8" fill="#6c6c6c" text-anchor="middle" textLength="42.2" lengthAdjust="spacingAndGlyphs" >Dashboard B</text>
<text x="35.6" y="158.8" font-size="8.8" fill="#ffffff" text-anchor="middle" textLength="42.2" lengthAdjust="spacingAndGlyphs" >Dashboard B</text>
<text x="36.1" y="198.9" font-size="8.8" fill="#6c6c6c" text-anchor="middle" textLength="42.2" lengthAdjust="spacingAndGlyphs" >Dashboard C</text>
<text x="35.6" y="198.4" font-size="8.8" fill="#ffffff" text-anchor="middle" textLength="42.2" lengthAdjust="spacingAndGlyphs" >Dashboard C</text>
<text x="36.1" y="238.4" font-size="8.8" fill="#6c6c6c" text-anchor="middle" textLength="42.2" lengthAdjust="spacingAndGlyphs" >Dashboard D</text>
<text x="35.6" y="237.9" font-size="8.8" fill="#ffffff" text-anchor="middle" textLength="42.2" lengthAdjust="spacingAndGlyphs" >Dashboard D</text>
<text x="36.1" y="277.9" font-size="8.8" fill="#6c6c6c" text-anchor="middle" textLength="32.6" lengthAdjust="spacingAndGlyphs" >Data View</text>
<text x="35.6" y="277.4" font-size="8.8" fill="#ffffff" text-anchor="middle" textLength="32.6" lengthAdjust="spacingAndGlyphs" >Data View</text>
<text x="36.1" y="317.6" font-size="8.8" fill="#6c6c6c" text-anchor="middle" textLength="46.3" lengthAdjust="spacingAndGlyphs" >Trouble Codes</text>
<text x="35.6" y="317.1" font-size="8.8" fill="#ffffff" text-anchor="middle" textLength="46.3" lengthAdjust="spacingAndGlyphs" >Trouble Codes</text>
<text x="36.1" y="357.0" font-size="8.8" fill="#6c6c6c" text-anchor="middle" textLength="33.3" lengthAdjust="spacingAndGlyphs" >PID Config</text>
<text x="35.6" y="356.5" font-size="8.8" fill="#ffffff" text-anchor="middle" textLength="33.3" lengthAdjust="spacingAndGlyphs" >PID Config</text>
</g>
</svg></body></html>
